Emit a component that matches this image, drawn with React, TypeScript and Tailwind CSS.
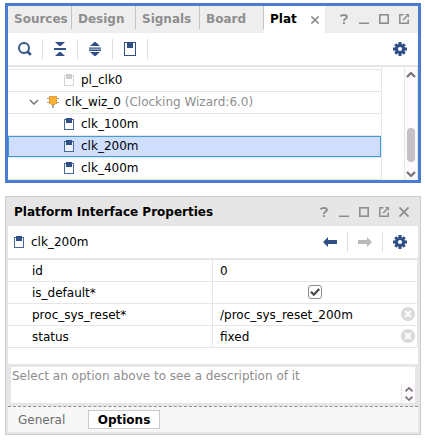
import { useState, type ReactNode } from 'react';

const BLUE = '#2f4f86';
const GREY = '#8e8e8e';

function PortIcon({ faded = false }: { faded?: boolean }) {
  return (
    <svg width="10" height="12" viewBox="0 0 10 12" shapeRendering="crispEdges" className="shrink-0" aria-hidden="true">
      <rect x="0.5" y="1.5" width="9" height="10" fill="#fff" fillOpacity="0.6" stroke={faded ? '#d6d6d6' : '#46689f'} />
      <rect x="2" y="0" width="6" height="5" fill={faded ? '#cdcdcd' : BLUE} />
    </svg>
  );
}

function ClipboardIcon() {
  return (
    <svg width="12" height="14" viewBox="0 0 12 14" shapeRendering="crispEdges" aria-hidden="true">
      <rect x="0.5" y="0.5" width="11" height="13" fill="#fff" stroke={BLUE} />
      <rect x="3" y="0" width="6" height="6" fill={BLUE} />
    </svg>
  );
}

function SearchIcon() {
  return (
    <svg width="14" height="14" viewBox="0 0 14 14" fill="none" stroke={BLUE} aria-hidden="true">
      <circle cx="6" cy="6" r="5" strokeWidth="1.9" />
      <path d="M9.5 9.5l3.3 3.3" strokeWidth="2.6" />
    </svg>
  );
}

function CollapseIcon() {
  return (
    <svg width="12" height="14" viewBox="0 0 12 14" fill={BLUE} aria-hidden="true">
      <path d="M1 0h10L6.8 4H5.2zM0 6h12v2H0zM5.2 10h1.6L11 14H1z" />
    </svg>
  );
}

function ExpandIcon() {
  return (
    <svg width="12" height="14" viewBox="0 0 12 14" fill={BLUE} aria-hidden="true">
      <path d="M5.4 0h1.2L11 4H1zM0 5.4h12v1.3H0zM0 7.6h12v1.3H0zM1 10h10L6.6 14H5.4z" />
    </svg>
  );
}

function GearIcon() {
  return (
    <svg width="14" height="14" viewBox="0 0 14 14" aria-hidden="true">
      <g fill={BLUE}>
        <rect x="5.5" y="0" width="3" height="14" />
        <rect x="0" y="5.5" width="14" height="3" />
        <rect x="5.5" y="0.3" width="3" height="13.4" transform="rotate(45 7 7)" />
        <rect x="5.5" y="0.3" width="3" height="13.4" transform="rotate(-45 7 7)" />
        <circle cx="7" cy="7" r="5.1" />
      </g>
      <circle cx="7" cy="7" r="2.1" fill="#fff" />
    </svg>
  );
}

function ArrowIcon({ forward = false }: { forward?: boolean }) {
  return (
    <svg width="14" height="10" viewBox="0 0 14 10" fill={forward ? '#b9b9b9' : BLUE} aria-hidden="true">
      <path d={forward ? 'M14 5L9 0v3H0v4h9v3z' : 'M0 5l5-5v3h9v4H5v3z'} />
    </svg>
  );
}

function ChipIcon() {
  return (
    <svg width="12" height="12" viewBox="0 0 12 12" className="shrink-0" shapeRendering="crispEdges" aria-hidden="true">
      <path d="M0 2h12v1H0zM0 6h12v1H0zM5 9h2v3H5z" fill="#a3a3a3" />
      <rect x="2" y="0" width="8" height="8" fill="#e0a13a" />
      <rect x="3" y="1" width="6" height="7" fill="#fbb034" />
      <rect x="4" y="8" width="4" height="1" fill="#e0a13a" />
    </svg>
  );
}

function Chevron({ up = false, heavy = false }: { up?: boolean; heavy?: boolean }) {
  return (
    <svg width="10" height="6" viewBox="0 0 10 6" fill="none" stroke="#777379" strokeWidth={heavy ? 2.2 : 1.5} className="shrink-0" aria-hidden="true">
      <path d={up ? 'M1 5l4-4 4 4' : 'M1 1l4 4 4-4'} />
    </svg>
  );
}

function SpinChevron({ up = false }: { up?: boolean }) {
  return (
    <svg width="8" height="5" viewBox="0 0 8 5" fill="none" stroke="#777379" strokeWidth="1.7" className="shrink-0" aria-hidden="true">
      <path d={up ? 'M0.5 4.3L4 1l3.5 3.3' : 'M0.5 0.7L4 4 7.5 0.7'} />
    </svg>
  );
}

function CloseIcon({ small = false }: { small?: boolean }) {
  return (
    <svg width={small ? 8 : 10} height={small ? 8 : 10} viewBox="0 0 10 10" stroke={GREY} strokeWidth={small ? 2 : 1.8} aria-hidden="true">
      <path d="M0.5 0.5l9 9M9.5 0.5l-9 9" />
    </svg>
  );
}

function WindowButtons({ closable = false }: { closable?: boolean }) {
  const box = 'flex w-5 h-5 items-center justify-center';
  return (
    <div className="flex shrink-0 items-center">
      <button aria-label="Help" className={box}>
        <svg width="10" height="10" viewBox="0 0 10 10" fill="none" stroke={GREY} strokeWidth="1.9" aria-hidden="true">
          <path d="M1.4 2.4C2.1 1.4 3.4 1 4.7 1c2 0 3.2.7 3.2 1.9C7.9 4.7 4.9 4.5 4.9 6.9M4.9 8.1V10" />
        </svg>
      </button>
      <button aria-label="Minimize" className={box}>
        <svg width="10" height="10" viewBox="0 0 10 10" aria-hidden="true">
          <path d="M0 8.5h10V10H0z" fill={GREY} />
        </svg>
      </button>
      <button aria-label="Maximize" className={box}>
        <svg width="10" height="10" viewBox="0 0 10 10" aria-hidden="true">
          <rect x="0.8" y="0.8" width="8.4" height="8.4" fill="none" stroke={GREY} strokeWidth="1.6" />
        </svg>
      </button>
      <button aria-label="Float" className={box}>
        <svg width="10" height="10" viewBox="0 0 10 10" fill="none" stroke={GREY} strokeWidth="1.5" aria-hidden="true">
          <path d="M4.5 0.8H0.8v8.4h8.4V5.5M4.2 6L8 2" />
          <path d="M6 0h4v4z" fill={GREY} stroke="none" />
        </svg>
      </button>
      {closable && (
        <button aria-label="Close panel" className={box}>
          <CloseIcon />
        </button>
      )}
    </div>
  );
}

function ToolButton({ label, children, last = false }: { label: string; children: ReactNode; last?: boolean }) {
  return (
    <button
      aria-label={label}
      className={`flex h-5 w-[35px] items-center justify-center border-r ${last ? 'border-transparent' : 'border-[#dedede]'}`}
    >
      {children}
    </button>
  );
}

const views = ['Sources', 'Design', 'Signals', 'Board'];
const clocks = ['clk_100m', 'clk_200m', 'clk_400m'];

function PlatformPanel() {
  const [selected, setSelected] = useState('clk_200m');
  return (
    <section className="border-3 border-[#4a7ccf] bg-white">
      <header className="flex h-[27px] items-center bg-[#eeeeee] font-bold">
        {views.map((view) => (
          <button key={view} className="h-[23px] w-16 self-start overflow-hidden border-r border-[#c4c4c4] pt-[3px] pl-1.5 text-left text-[#8e8e8e]">
            {view}
          </button>
        ))}
        <div className="flex h-full w-[61px] items-center bg-white pb-px pl-1.5">
          <button className="flex-1 text-left">Plat</button>
          <button aria-label="Close tab" className="mt-0.5 mr-1.5">
            <CloseIcon small />
          </button>
        </div>
        <div className="ml-auto pr-1 pb-px">
          <WindowButtons />
        </div>
      </header>

      <div className="flex h-[34px] items-center border-b-2 border-[#e6e6e6]">
        <ToolButton label="Search"><SearchIcon /></ToolButton>
        <ToolButton label="Collapse all"><CollapseIcon /></ToolButton>
        <ToolButton label="Expand all"><ExpandIcon /></ToolButton>
        <ToolButton label="Ports"><ClipboardIcon /></ToolButton>
        <div className="ml-auto">
          <ToolButton label="Settings" last><GearIcon /></ToolButton>
        </div>
      </div>

      <div className="flex">
        <ul className="min-w-0 flex-1 border-r border-[#e6e6e6]">
          <li className="h-[3px] border-b border-[#e6e6e6]" />
          <li className="flex h-[22px] items-center gap-[7px] border-b border-[#e6e6e6] pb-px pl-14">
            <PortIcon faded />
            pl_clk0
          </li>
          <li className="flex h-[22px] items-center border-b border-[#e6e6e6] pb-px pl-[21px]">
            <button aria-label="Collapse clk_wiz_0"><Chevron /></button>
            <span className="ml-2 flex items-center gap-1.5 whitespace-nowrap">
              <ChipIcon />
              <span>
                clk_wiz_0 <span className="text-[#8e8e8e]">(Clocking Wizard:6.0)</span>
              </span>
            </span>
          </li>
          {clocks.map((clock) => (
            <li key={clock} className="h-[22px] border-b border-[#e6e6e6]">
              <button
                onClick={() => setSelected(clock)}
                className={`flex h-[21px] w-full items-center gap-[7px] border pb-px pl-[55px] ${
                  selected === clock ? 'border-[#429ad6] bg-[#cfdeff]' : 'border-transparent'
                }`}
              >
                <PortIcon />
                {clock}
              </button>
            </li>
          ))}
        </ul>
        <div className="ml-[22px] flex w-3.5 flex-col items-center border-x border-[#e6e6e6] bg-[#fdf9fd] pt-[5px] pb-[3px]">
          <Chevron up heavy />
          <div className="mt-auto mb-[9px] h-[34px] w-2 rounded-full bg-[#c3c1c5]" />
          <Chevron heavy />
        </div>
      </div>
    </section>
  );
}

function TextCell({ name, value, clearable = false }: { name: string; value: string; clearable?: boolean }) {
  return (
    <div className="flex items-center justify-between pr-0.5 pl-[7px]">
      <input aria-label={name} defaultValue={value} className="h-5 min-w-0 flex-1 bg-transparent pt-0.5 outline-none" />
      {clearable && (
        <button aria-label={`Clear ${name}`}>
          <svg width="14" height="14" viewBox="0 0 14 14" aria-hidden="true">
            <circle cx="7" cy="7" r="7" fill="#d9d9d9" />
            <path d="M4 4l6 6M10 4l-6 6" stroke="#fff" strokeWidth="1.8" />
          </svg>
        </button>
      )}
    </div>
  );
}

function CheckCell() {
  const [checked, setChecked] = useState(true);
  return (
    <div className="flex justify-center">
      <label className="relative block h-3.5 w-3.5">
        <input
          type="checkbox"
          aria-label="is_default"
          checked={checked}
          onChange={(e) => setChecked(e.target.checked)}
          className="block h-3.5 w-3.5 appearance-none rounded-[3px] border border-[#8b8b8b] bg-white"
        />
        {checked && (
          <svg width="14" height="14" viewBox="0 0 14 14" className="pointer-events-none absolute inset-0" aria-hidden="true">
            <path d="M3 6.8l2.8 2.9L11.2 4" fill="none" stroke="#4a4a4a" strokeWidth="2.3" />
          </svg>
        )}
      </label>
    </div>
  );
}

function PropertiesPanel() {
  const rows: { name: string; cell: ReactNode }[] = [
    { name: 'id', cell: <TextCell name="id" value="0" /> },
    { name: 'is_default*', cell: <CheckCell /> },
    { name: 'proc_sys_reset*', cell: <TextCell name="proc_sys_reset" value="/proc_sys_reset_200m" clearable /> },
    { name: 'status', cell: <TextCell name="status" value="fixed" clearable /> },
  ];
  return (
    <section className="border border-[#cbcbcb] bg-[#e6e6e6] px-0.5 pb-0.5">
      <header className="flex h-[29px] items-center justify-between pt-px pr-1 pl-1.5">
        <h2 className="font-bold whitespace-nowrap">Platform Interface Properties</h2>
        <WindowButtons closable />
      </header>

      <div className="flex h-[34px] items-center border-b-2 border-[#e6e6e6] bg-white pl-1.5">
        <div className="flex flex-1 items-center gap-[7px]">
          <PortIcon />
          clk_200m
        </div>
        <ToolButton label="Back"><ArrowIcon /></ToolButton>
        <ToolButton label="Forward"><ArrowIcon forward /></ToolButton>
        <ToolButton label="Settings" last><GearIcon /></ToolButton>
      </div>

      <div className="bg-white pb-4">
        <table className="w-full table-fixed border-separate border-spacing-0">
          <tbody>
            {rows.map((row) => (
              <tr key={row.name} className="h-[22px]">
                <th scope="row" className="border-r border-b border-[#e6e6e6] p-0 pl-6 text-left font-normal">
                  {row.name}
                </th>
                <td className="border-r border-b border-[#e6e6e6] p-0 pb-px">{row.cell}</td>
              </tr>
            ))}
          </tbody>
        </table>
      </div>

      <div className="p-[3px]">
        <div className="flex h-9 bg-white">
          <textarea
            aria-label="Description"
            readOnly
            value="Select an option above to see a description of it"
            className="h-9 min-w-0 flex-1 resize-none overflow-hidden bg-transparent pt-px pl-px whitespace-nowrap text-[#8e8e8e] outline-none"
          />
          <div className="flex h-[19px] w-3.5 shrink-0 flex-col items-center justify-between self-end border-l border-[#e6e6e6] bg-[#fdf9fd] pt-[3px] pb-0.5">
            <button aria-label="Scroll up" className="flex"><SpinChevron up /></button>
            <button aria-label="Scroll down" className="flex"><SpinChevron /></button>
          </div>
        </div>
      </div>

      <footer className="flex h-[26px] items-center gap-4 border-t border-dashed border-[#8e8e8e] bg-[#f7f7f7] pl-2.5">
        <button className="w-[54px] text-left text-[#6b6b6b]">General</button>
        <button className="h-[19px] w-[72px] border border-[#cbcbcb] bg-white font-bold">Options</button>
      </footer>
    </section>
  );
}

export default function App() {
  return (
    <main className="flex flex-col gap-[13px] bg-white pt-[3px] pr-1 pb-1.5 pl-[5px] font-['DejaVu_Sans',sans-serif] text-[12px] leading-4 text-black">
      <PlatformPanel />
      <PropertiesPanel />
    </main>
  );
}
